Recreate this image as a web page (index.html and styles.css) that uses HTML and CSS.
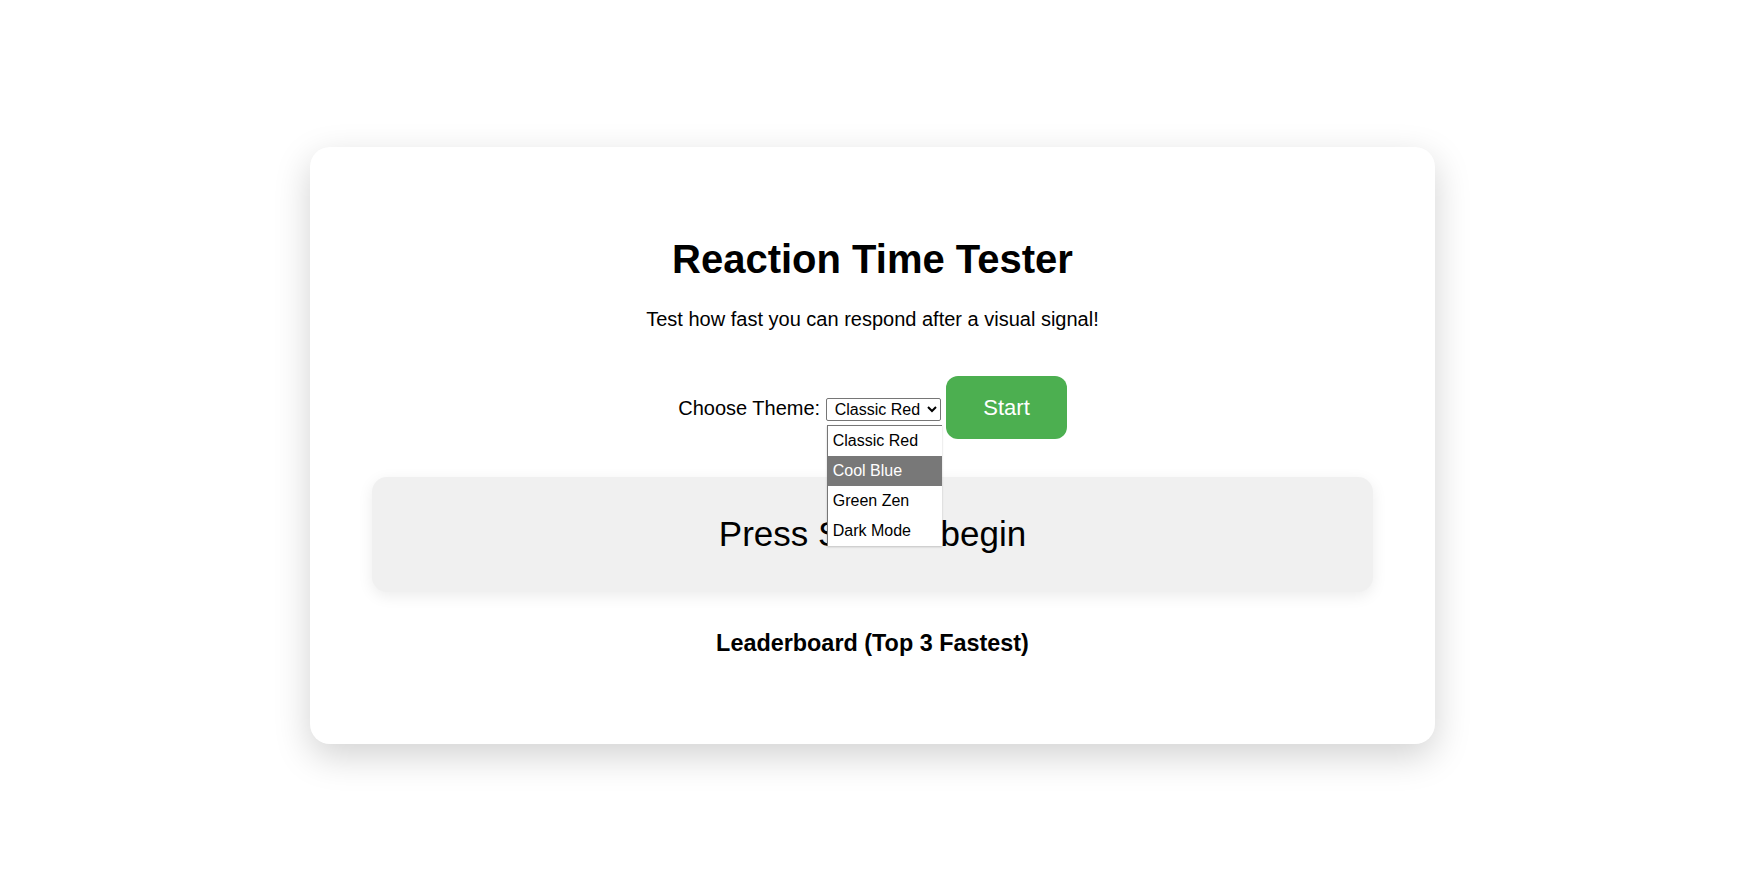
FILE: index.html
```html
<!DOCTYPE html>
<html lang="en">
<head>
<meta charset="utf-8">
<title>Reaction Time Tester</title>
<link rel="stylesheet" href="styles.css">
</head>
<body>
<div class="page">
  <main class="card">
    <h1 class="title">Reaction Time Tester</h1>
    <p class="subtitle">Test how fast you can respond after a visual signal!</p>
    <div class="controls">
      <label class="theme-label" for="theme">Choose Theme:</label>
      <span class="select-wrap"><select id="theme" class="theme-select">
          <option>Classic Red</option>
          <option>Cool Blue</option>
          <option>Green Zen</option>
          <option>Dark Mode</option>
        </select><ul class="dropdown">
          <li class="opt">Classic Red</li>
          <li class="opt active">Cool Blue</li>
          <li class="opt">Green Zen</li>
          <li class="opt">Dark Mode</li>
        </ul></span>
      <button class="start-btn" type="button">Start</button>
    </div>
    <div class="status">Press Start to begin</div>
    <h3 class="board-title">Leaderboard (Top 3 Fastest)</h3>
  </main>
</div>
</body>
</html>
```
FILE: styles.css
```css
html, body {
  margin: 0;
  padding: 0;
  background: #ffffff;
}

body {
  font-family: Arial, "Liberation Sans", sans-serif;
  font-size: 20px;
  color: #000;
}

.page {
  display: flex;
  justify-content: center;
  padding: 147px 17px 100px 0;
}

.card {
  width: 1001px;
  padding: 62px;
  background: #fff;
  border-radius: 20px;
  box-shadow: 0 12px 36px rgba(0, 0, 0, 0.18);
  text-align: center;
}

.title {
  font-size: 40px;
  font-weight: bold;
  line-height: 46px;
  margin: 27px 0 26px;
}

.subtitle {
  font-size: 20px;
  line-height: 23px;
  margin: 0;
}

.controls {
  margin-top: 45px;
  line-height: 23px;
}

.theme-label {
  font-size: 20px;
}

.select-wrap {
  position: relative;
  display: inline-block;
}

.theme-select {
  font-family: Arial, "Liberation Sans", sans-serif;
  font-size: 16px;
  width: 115px;
  height: 23px;
  border: 1px solid #767676;
  border-radius: 2px;
  background: #fff;
  color: #000;
  padding: 0 0 0 4px;
}

.dropdown {
  position: absolute;
  left: 1px;
  top: 28px;
  width: 114px;
  margin: 0;
  padding: 0;
  list-style: none;
  background: #fff;
  border-left: 1px solid #767676;
  border-top: 1px solid #767676;
  box-shadow: 0 1px 2px rgba(0, 0, 0, 0.2);
  text-align: left;
  z-index: 5;
}

.opt {
  height: 30px;
  line-height: 30px;
  padding: 0 0 0 5px;
  font-size: 16px;
  color: #000;
  white-space: nowrap;
}

.opt.active {
  background: #787878;
  color: #fff;
}

.start-btn {
  font-family: Arial, "Liberation Sans", sans-serif;
  font-size: 22px;
  line-height: 25px;
  padding: 19px 37px;
  border: none;
  border-radius: 12px;
  background: #4caf50;
  color: #fff;
  cursor: pointer;
}

.status {
  margin-top: 38px;
  height: 115px;
  box-sizing: border-box;
  padding-top: 37px;
  background: #f0f0f0;
  border-radius: 15px;
  box-shadow: 0 4px 15px rgba(0, 0, 0, 0.08);
  font-size: 35px;
  line-height: 40px;
}

.board-title {
  font-size: 23.4px;
  line-height: 27px;
  font-weight: bold;
  margin: 38px 0 25px;
}
```
